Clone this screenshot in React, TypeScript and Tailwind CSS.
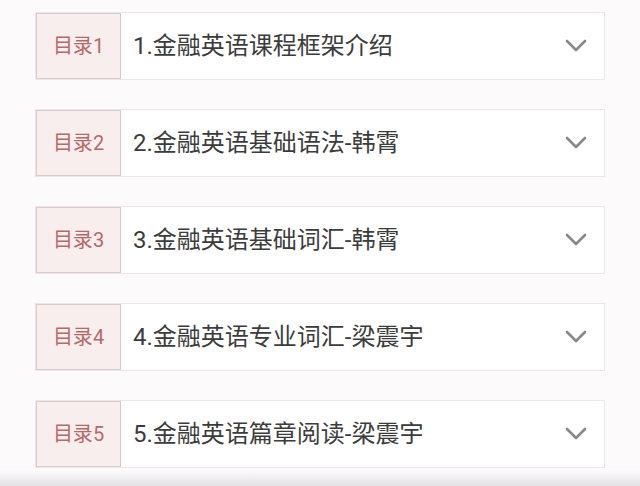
const chapters = [
  "1.金融英语课程框架介绍",
  "2.金融英语基础语法-韩霄",
  "3.金融英语基础词汇-韩霄",
  "4.金融英语专业词汇-梁震宇",
  "5.金融英语篇章阅读-梁震宇",
];

const Chevron = () => (
  <svg width="22" height="13" viewBox="0 0 22 13" fill="none">
    <polyline
      points="2,2 11,11 20,2"
      stroke="#888888"
      strokeWidth="2.6"
      strokeLinecap="round"
      strokeLinejoin="round"
    />
  </svg>
);

const App = () => {
  return (
    <div
      className="w-[640px] h-[486px] bg-[#fdfafc] overflow-hidden flex flex-col"
      style={{ fontFamily: '"Roboto", "Noto Sans CJK SC", sans-serif' }}
    >
      <div className="flex flex-col gap-[29px] pt-[12px] pl-[35px] pr-[35px]">
        {chapters.map((title, i) => (
          <div
            key={i}
            className="h-[68px] flex items-stretch bg-white border border-[#ece7ea]"
          >
            <div className="w-[85px] flex items-center justify-center bg-[#f9eeee] border border-[#dccaca] text-[20px] text-[#b56a6a]">
              目录{i + 1}
            </div>
            <div className="flex-1 flex items-center pl-[12px] text-[24px] text-[#3c3c3c]">
              {title}
            </div>
            <div className="flex items-center pr-[17px] pb-[2px]">
              <Chevron />
            </div>
          </div>
        ))}
      </div>
      <div className="mt-auto h-[16px] bg-gradient-to-b from-[#fdfafc] to-[#e4e2e4]" />
    </div>
  );
};

export default App;
